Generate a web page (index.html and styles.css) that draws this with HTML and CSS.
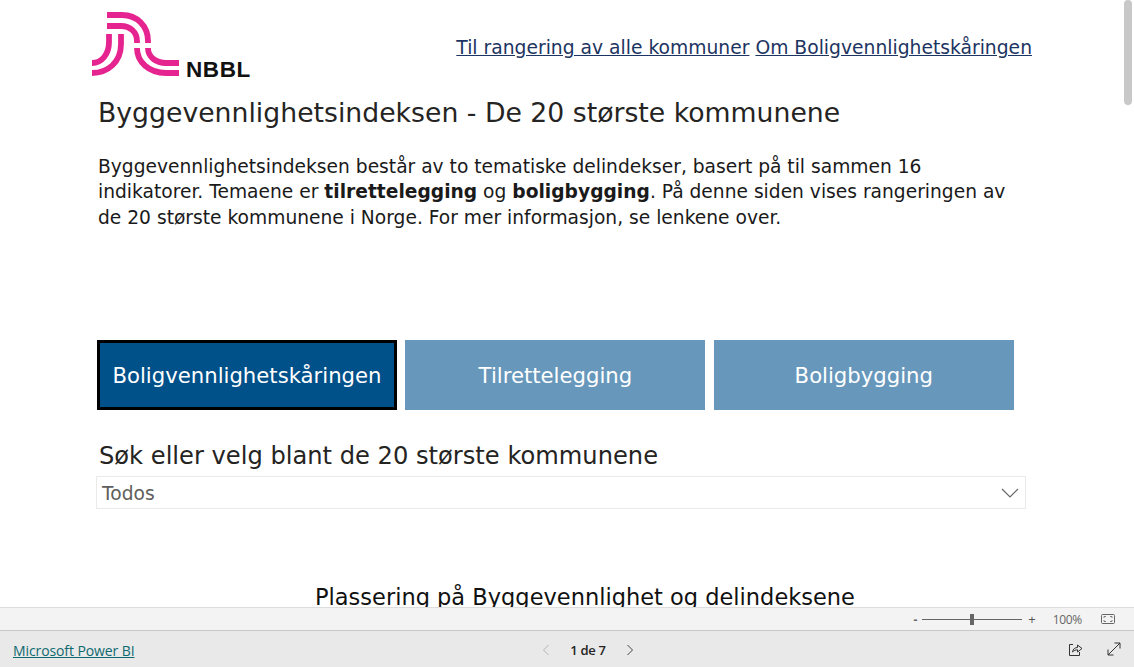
FILE: index.html
```html
<!DOCTYPE html>
<html lang="en">

<head>
    <meta charset="UTF-8">
    <meta name="viewport" content="width=device-width, initial-scale=1.0">
    <title>Byggevennlighetsindeksen</title>
    <link rel="stylesheet" href="styles.css">
</head>

<body>
    <div class="rapport">
        <div class="rulle"></div>
        <div class="topp">
            <div class="logo">
                <svg class="logo-merke" width="90" height="70" viewBox="0 0 90 70" fill="none" stroke="#e6248f" stroke-width="5.8">
                    <path d="M15 3H30C45 3 56 14 56 29V31" />
                    <path d="M15 14H29C38 14 45 20 45 29V31" />
                    <path d="M17 22V30C17 42 10 51 0 51" />
                    <path d="M29 22V32C29 50 16 61 0 61" />
                    <path d="M45 36C45 50 57 61 74 61H87" />
                    <path d="M56 36C56 45 64 51 74 51H87" />
                </svg>
                <span class="logo-tekst">NBBL</span>
            </div>
            <nav class="lenker">
                <a href="#">Til rangering av alle kommuner</a>
                <a href="#">Om Boligvennlighetskåringen</a>
            </nav>
        </div>
        <h1 class="tittel">Byggevennlighetsindeksen - De 20 største kommunene</h1>
        <p class="ingress">Byggevennlighetsindeksen består av to tematiske delindekser, basert på til sammen 16 indikatorer. Temaene er <b>tilrettelegging</b> og <b>boligbygging</b>. På denne siden vises rangeringen av de 20 største kommunene i Norge. For mer informasjon, se lenkene over.</p>
        <div class="knapper">
            <button class="knapp aktiv">Boligvennlighetskåringen</button>
            <button class="knapp">Tilrettelegging</button>
            <button class="knapp">Boligbygging</button>
        </div>
        <h2 class="sok-tittel">Søk eller velg blant de 20 største kommunene</h2>
        <div class="velger">
            <span>Todos</span>
            <svg width="18" height="11" viewBox="0 0 18 11" fill="none" stroke="#666" stroke-width="1.2">
                <path d="M1 1L9 9L17 1" />
            </svg>
        </div>
        <h2 class="plassering">Plassering på Byggevennlighet og delindeksene</h2>
    </div>

    <div class="zoomlinje">
        <span class="minus">-</span>
        <div class="glider"><div class="glider-knott"></div></div>
        <span class="pluss">+</span>
        <span class="prosent">100%</span>
        <svg width="14" height="10" viewBox="0 0 14 10" fill="none" stroke="#666">
            <rect x="0.5" y="0.5" width="13" height="9" rx="1" />
            <path d="M3 4V2.5H5M9 2.5H11V4M11 6V7.5H9M5 7.5H3V6" stroke-width="0.8" />
        </svg>
    </div>

    <div class="bunn">
        <a class="pbi" href="#">Microsoft Power BI</a>
        <div class="sider">
            <svg width="8" height="12" viewBox="0 0 8 12" fill="none" stroke="#b5b5b5">
                <path d="M6.5 1L1.5 6L6.5 11" />
            </svg>
            <span>1 de 7</span>
            <svg width="8" height="12" viewBox="0 0 8 12" fill="none" stroke="#444">
                <path d="M1.5 1L6.5 6L1.5 11" />
            </svg>
        </div>
        <div class="verktoy">
            <svg width="15" height="15" viewBox="0 0 15 15" fill="none" stroke="#333">
                <path d="M5 2.5H1.5V13.5H11.5V10" />
                <path d="M4.5 10C5 7 7 5.5 9.5 5.5V3L14 6.5L9.5 10V7.8C7.5 7.8 6 8.5 4.5 10Z" />
            </svg>
            <svg width="14" height="14" viewBox="0 0 14 14" fill="none" stroke="#333">
                <path d="M1 13L13 1M7.5 1H13V6.5M1 7.5V13H6.5" />
            </svg>
        </div>
    </div>
</body>

</html>
```
FILE: styles.css
```css
* {
    margin: 0px;
    padding: 0px;
    box-sizing: border-box;
}

body {
    height: 667px;
    display: flex;
    flex-direction: column;
    overflow: hidden;
    background-color: #ffffff;
    font-family: "DejaVu Sans", sans-serif;
    color: #252423;
}

.rapport {
    height: 607px;
    overflow: hidden;
    padding: 12px 0px 0px 92px;
    position: relative;
}

.rulle {
    position: absolute;
    top: 0px;
    right: 2px;
    width: 8px;
    height: 105px;
    background-color: #c8c8c8;
    border-radius: 4px;
}

.topp {
    width: 940px;
    display: flex;
    justify-content: space-between;
    align-items: flex-start;
}

.logo {
    width: 160px;
    height: 70px;
    position: relative;
}

.logo-tekst {
    position: absolute;
    left: 94px;
    bottom: -1px;
    font-family: "Liberation Sans", sans-serif;
    font-weight: 700;
    font-size: 22.5px;
    letter-spacing: 0.6px;
    color: #111111;
}

.lenker {
    padding-top: 25px;
    display: flex;
    gap: 6px;
    font-size: 18.73px;
}

.lenker a {
    color: #1c3461;
}

.tittel {
    margin: 15px 0px 0px 6px;
    font-size: 26.7px;
    font-weight: 400;
    line-height: 32px;
}

.ingress {
    width: 920px;
    margin: 25px 0px 0px 6px;
    font-size: 18.67px;
    line-height: 25.4px;
    color: #1a1a1a;
}

.knapper {
    margin: 110px 0px 0px 5px;
    display: flex;
    gap: 8.4px;
}

.knapp {
    width: 300px;
    height: 70px;
    padding-top: 1px;
    border: none;
    background-color: #6798bc;
    color: #ffffff;
    font-family: inherit;
    font-size: 21.2px;
}

.knapp.aktiv {
    background-color: #00508a;
    border: 3px solid #000000;
    padding-top: 0px;
}

.sok-tittel {
    margin: 31px 0px 0px 7px;
    font-size: 24.17px;
    font-weight: 400;
    line-height: 30px;
}

.velger {
    width: 930px;
    height: 33px;
    margin: 5px 0px 0px 4px;
    padding: 2px 6px 0px 5px;
    border: 1px solid #eaeaea;
    display: flex;
    justify-content: space-between;
    align-items: center;
    font-size: 18.67px;
    color: #605e5c;
}

.plassering {
    margin: 73px 0px 0px 223px;
    font-size: 22.5px;
    font-weight: 400;
    line-height: 30px;
    white-space: nowrap;
    color: #111111;
}

.zoomlinje {
    height: 23px;
    background-color: #f3f3f3;
    border-top: 1px solid #dddddd;
    display: flex;
    justify-content: flex-end;
    align-items: center;
    padding-right: 19px;
    font-family: "Open Sans", sans-serif;
    font-size: 12px;
    color: #666666;
}

.minus {
    margin-right: 5px;
    font-weight: 700;
}

.glider {
    width: 100px;
    height: 1px;
    background-color: #666666;
    display: flex;
    align-items: center;
    justify-content: center;
}

.glider-knott {
    width: 4px;
    height: 11px;
    background-color: #666666;
}

.pluss {
    margin-left: 6px;
    font-size: 13px;
    color: #555555;
}

.prosent {
    margin: 0px 19px 0px 17px;
    letter-spacing: -0.3px;
}

.bunn {
    height: 37px;
    padding: 2px 13px 0px;
    background-color: #e9e9e9;
    border-top: 1px solid #c8c8c8;
    display: grid;
    grid-template-columns: 1fr auto 1fr;
    align-items: center;
    font-family: "Open Sans", sans-serif;
    font-size: 14px;
}

.pbi {
    color: #0e6a70;
    letter-spacing: -0.1px;
}

.sider {
    margin-left: 42px;
    display: flex;
    align-items: center;
    gap: 20px;
    font-size: 13px;
    color: #252423;
    font-weight: 600;
    letter-spacing: -0.3px;
}

.verktoy {
    margin-top: -2px;
    display: flex;
    justify-content: flex-end;
    align-items: center;
    gap: 24px;
}
```
